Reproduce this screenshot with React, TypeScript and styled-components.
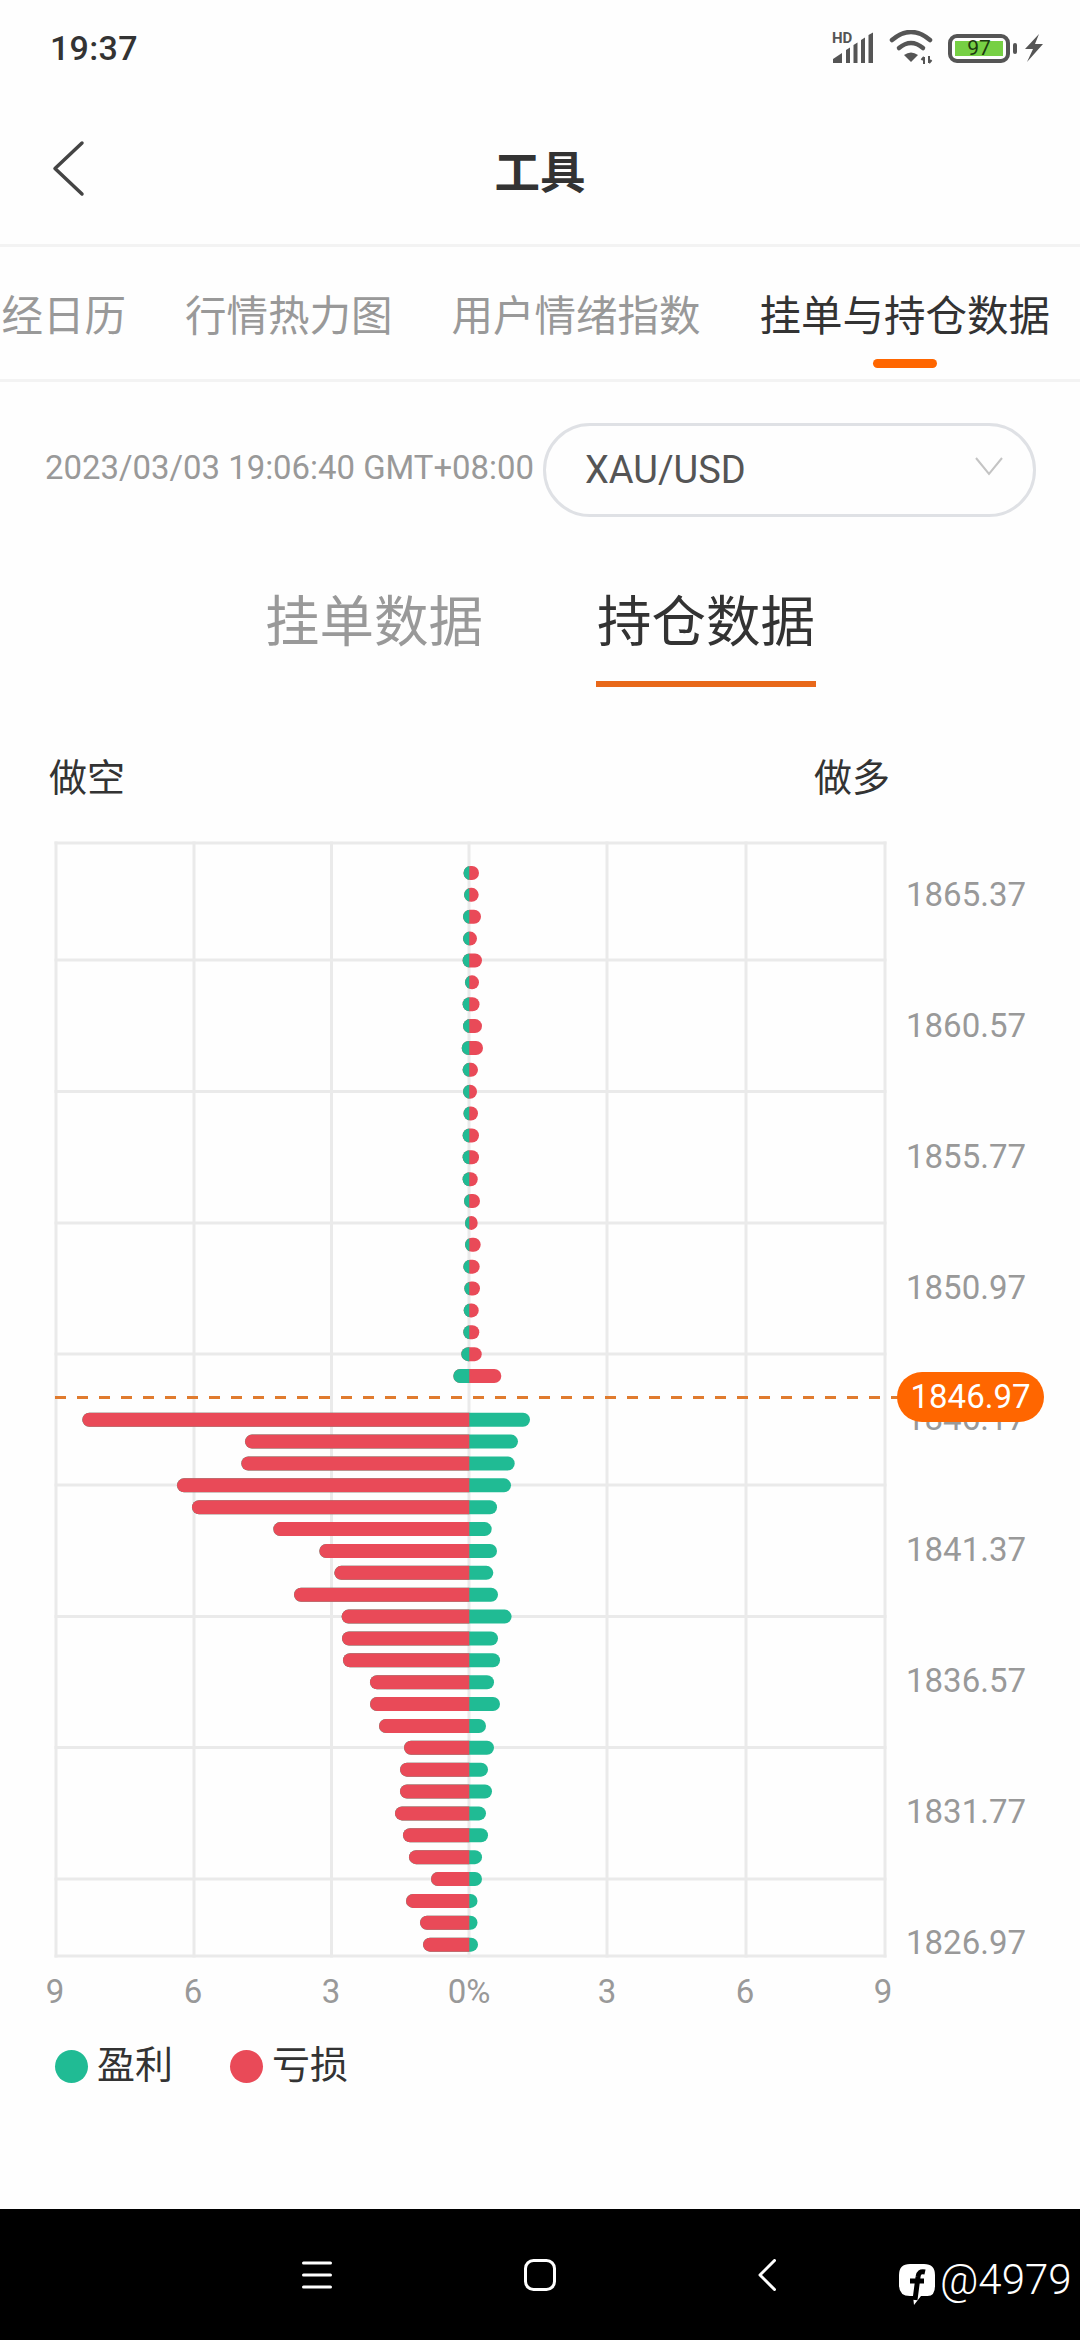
import React from "react";
import styled, { createGlobalStyle } from "styled-components";

const Global = createGlobalStyle`
  html, body { margin: 0; padding: 0; background: #fff; }
  body { font-family: Roboto, "Noto Sans CJK SC", sans-serif; }
`;

const Page = styled.div`
  width: 1080px;
  height: 2340px;
  display: flex;
  flex-direction: column;
  background: #fefefe;
  overflow: hidden;
`;

const StatusBar = styled.div`
  height: 100px;
  flex: none;
  display: flex;
  align-items: center;
  justify-content: space-between;
  padding: 0 37px 4px 50px;
  box-sizing: border-box;
`;
const Clock = styled.span`
  font-size: 34px;
  font-weight: 500;
  color: #333;
  letter-spacing: 0.3px;
`;
const StatusIcons = styled.div`
  display: flex;
  align-items: center;
`;
const Signal = styled.svg`
  display: block;
  width: 42px;
  height: 32px;
  margin-right: 15px;
  overflow: visible;
`;
const Wifi = styled.svg`
  display: block;
  width: 46px;
  height: 36px;
  margin-right: 13px;
`;
const Battery = styled.div`
  position: relative;
  width: 62px;
  height: 29px;
  box-sizing: border-box;
  border: 4px solid #555;
  border-radius: 9px;
  padding: 3px;
  margin-right: 14px;
  display: flex;
  &::after {
    content: "";
    position: absolute;
    right: -11px;
    top: 5px;
    width: 4px;
    height: 11px;
    border-radius: 2px;
    background: #555;
  }
`;
const BatteryFill = styled.div`
  flex: 1;
  background: #76d044;
  color: #1d3a10;
  font-size: 21px;
  line-height: 15px;
  text-align: center;
  overflow: visible;
`;
const Bolt = styled.svg`
  display: block;
  width: 19px;
  height: 29px;
`;

const Header = styled.header`
  height: 144px;
  flex: none;
  position: relative;
  display: flex;
  align-items: center;
  justify-content: center;
  border-bottom: 3px solid #f3f3f3;
`;
const BackButton = styled.svg`
  position: absolute;
  left: 50px;
  top: 40px;
  width: 36px;
  height: 58px;
`;
const Title = styled.h1`
  margin: 0 0 6px;
  font-family: "Noto Sans CJK SC", sans-serif;
  font-size: 45.5px;
  font-weight: 700;
  color: #333;
`;

const TabStrip = styled.nav`
  height: 132px;
  flex: none;
  display: flex;
  justify-content: flex-end;
  align-items: center;
  gap: 59px;
  padding-right: 30px;
  overflow: hidden;
  border-bottom: 3px solid #f3f3f3;
`;
const Tab = styled.div<{ $active?: boolean }>`
  flex: none;
  position: relative;
  font-family: "Noto Sans CJK SC", sans-serif;
  font-size: 41.5px;
  line-height: 60px;
  color: ${(p) => (p.$active ? "#333" : "#999")};
  ${(p) =>
    p.$active &&
    `&::after {
      content: "";
      position: absolute;
      left: 50%;
      margin-left: -32px;
      bottom: -25px;
      width: 64px;
      height: 9px;
      border-radius: 5px;
      background: #ff6600;
    }`}
`;

const ToolRow = styled.div`
  margin-top: 41px;
  padding-left: 45px;
  display: flex;
  align-items: center;
  gap: 9px;
`;
const DateText = styled.span`
  flex: none;
  width: 489px;
  white-space: nowrap;
  font-size: 32.9px;
  color: #999;
  padding-bottom: 6px;
`;
const Select = styled.div`
  width: 493px;
  height: 94px;
  box-sizing: border-box;
  border: 3px solid #dfe1e5;
  border-radius: 47px;
  display: flex;
  align-items: center;
  justify-content: space-between;
  padding: 0 29px 0 39px;
  font-size: 38px;
  color: #555;
`;
const Chevron = styled.svg`
  width: 30px;
  height: 20px;
  margin-bottom: 8px;
`;

const SubTabs = styled.div`
  margin-top: 69px;
  display: flex;
  justify-content: center;
  gap: 112px;
`;
const SubTab = styled.div<{ $active?: boolean }>`
  width: 220px;
  text-align: center;
  font-family: "Noto Sans CJK SC", sans-serif;
  font-size: 54.5px;
  line-height: 64px;
  padding-bottom: 31px;
  color: ${(p) => (p.$active ? "#333" : "#999")};
  border-bottom: 6px solid ${(p) => (p.$active ? "#e8681a" : "transparent")};
`;

const SideLabels = styled.div`
  margin-top: 66px;
  padding: 0 190px 0 49px;
  display: flex;
  justify-content: space-between;
  font-family: "Noto Sans CJK SC", sans-serif;
  font-size: 38px;
  line-height: 44px;
  color: #333;
`;

const ChartRow = styled.div`
  position: relative;
  margin-top: 41px;
  padding-left: 50px;
  display: flex;
  height: 1122px;
`;
const Plot = styled.svg`
  display: block;
  flex: none;
  width: 850px;
  height: 1122px;
`;
const PriceAxis = styled.div`
  margin: 0 0 -3px 6px;
  padding: 36.5px 0 0;
  display: flex;
  flex-direction: column;
  justify-content: space-between;
  font-size: 33px;
  line-height: 40px;
  color: #999;
`;
const PriceBadge = styled.div`
  position: absolute;
  left: 897px;
  top: 534px;
  width: 147px;
  height: 50px;
  border-radius: 25px;
  background: #ff6600;
  color: #fff;
  font-size: 33px;
  line-height: 50px;
  text-align: center;
`;

const XAxis = styled.div`
  margin-top: 12px;
  display: flex;
  gap: 28px;
`;
const XTick = styled.span`
  width: 110px;
  text-align: center;
  font-size: 33px;
  line-height: 40px;
  color: #999;
`;

const Legend = styled.div`
  margin-top: 28px;
  padding-left: 55px;
  display: flex;
  align-items: center;
`;
const LegendItem = styled.div`
  display: flex;
  align-items: center;
  gap: 9px;
  margin-right: 57px;
`;
const LegendText = styled.span`
  font-family: "Noto Sans CJK SC", sans-serif;
  font-size: 38px;
  line-height: 44px;
  padding-bottom: 9px;
  color: #333;
`;
const LegendDot = styled.span<{ $color: string }>`
  width: 33px;
  height: 33px;
  border-radius: 50%;
  background: ${(p) => p.$color};
`;

const NavBar = styled.div`
  margin-top: auto;
  height: 131px;
  flex: none;
  background: #000;
  display: flex;
  align-items: center;
  padding-left: 302px;
`;
const NavIcon = styled.svg<{ $gap: number }>`
  display: block;
  flex: none;
  margin-right: ${(p) => p.$gap}px;
`;
const Watermark = styled.div`
  display: flex;
  align-items: center;
  gap: 5px;
  margin-top: 19px;
`;
const WatermarkText = styled.span`
  font-family: Roboto, sans-serif;
  font-weight: 300;
  font-size: 42px;
  line-height: 44px;
  margin-bottom: 8px;
  color: #fff;
`;

const GREEN = "#20bb94";
const RED = "#e94a58";
const GRID = "#eaeaea";
const CX = 469.3;

// [left end, right end] in page pixels, one row per price step; null is the slot of the current price
const ROWS: ([number, number] | null)[] = [
  [463.5, 479], [464, 478.7], [463, 481], [463, 477], [462.6, 482],
  [465, 479], [462.6, 479.5], [463, 482], [461.7, 483], [462.6, 478],
  [463, 477], [463.5, 478], [462.6, 479], [462.6, 479], [462.6, 477.7],
  [464, 480], [465, 477.7], [465, 480.7], [463.3, 479.7], [464.3, 480],
  [463.7, 478.7], [463.3, 479.3], [461.3, 481.7], [453.3, 501.3], null,
  [82.3, 530], [245, 518], [241.3, 514.7], [177, 511], [192, 497],
  [273.3, 491.7], [319.3, 497], [334.3, 493.3], [294, 498], [341.6, 511.6],
  [342, 498], [343, 500], [370, 494], [370, 500], [379, 486],
  [404, 494], [400, 488], [400, 492], [395, 486], [403, 488],
  [409, 482], [431, 482], [406, 477.5], [420, 477.5], [423, 478],
];

const V_LINES = [56, 194, 331.5, 469, 607, 746, 885];
const H_LINES = [843, 960, 1091.5, 1223, 1354, 1485, 1616.5, 1747.5, 1879, 1956];
const PRICES = ["1865.37", "1860.57", "1855.77", "1850.97", "1846.17", "1841.37", "1836.57", "1831.77", "1826.97"];
const TICKS = ["9", "6", "3", "0%", "3", "6", "9"];

function Chart() {
  return (
    <Plot viewBox="50 838 850 1122">
      <defs>
        <clipPath id="leftHalf">
          <rect x="50" y="838" width={CX - 50} height="1122" />
        </clipPath>
      </defs>
      {V_LINES.map((x) => (
        <line key={x} x1={x} x2={x} y1="841.5" y2="1957.5" stroke={GRID} strokeWidth="3" />
      ))}
      {H_LINES.map((y) => (
        <line key={y} x1="54.5" x2="886.5" y1={y} y2={y} stroke={GRID} strokeWidth="3" />
      ))}
      {ROWS.map((row, i) => {
        if (!row) return null;
        const y = 873 + i * 21.87 - 7;
        const w = row[1] - row[0];
        const upper = i < 24;
        return (
          <g key={i}>
            <rect x={row[0]} y={y} width={w} height="14" rx="7" fill={upper ? RED : GREEN} />
            <rect x={row[0]} y={y} width={w} height="14" rx="7" fill={upper ? GREEN : RED} clipPath="url(#leftHalf)" />
          </g>
        );
      })}
      <line x1="55" x2="900" y1="1397.5" y2="1397.5" stroke="#e07b2e" strokeWidth="3" strokeDasharray="11 11" />
    </Plot>
  );
}

export default function App() {
  return (
    <Page>
      <Global />
      <StatusBar>
        <Clock>19:37</Clock>
        <StatusIcons>
          <Signal viewBox="0 0 42 32">
            <text x="0" y="11" fontFamily="Roboto, sans-serif" fontWeight="700" fontSize="15" fill="#555">HD</text>
            <path d="M1 31V27L10 21V31Z" fill="#555" />
            <path d="M14 31V18L18 15.5V31ZM21.5 31V13L25.5 10.5V31ZM29 31V8L33 5.5V31ZM36.5 31V3L41 0.5V31Z" fill="#555" />
          </Signal>
          <Wifi viewBox="0 0 46 36">
            <g fill="none" stroke="#555" strokeWidth="4.5" strokeLinecap="round">
              <path d="M3 10Q22 -6 41 10" />
              <path d="M10 18Q22 8 34 18" />
            </g>
            <path d="M15 25Q22 20 29 25L22 32Z" fill="#555" />
            <path d="M35 34V27M35 27L32.5 30M40 26V33M40 33L42.5 30" fill="none" stroke="#555" strokeWidth="2" />
          </Wifi>
          <Battery>
            <BatteryFill>97</BatteryFill>
          </Battery>
          <Bolt viewBox="0 0 19 29">
            <path d="M15 0L1 15H9L3 28L19 10H11Z" fill="#555" />
          </Bolt>
        </StatusIcons>
      </StatusBar>

      <Header>
        <BackButton viewBox="0 0 36 58">
          <path d="M32 3L5 28.5L32 54" fill="none" stroke="#444" strokeWidth="3.5" strokeLinecap="round" strokeLinejoin="round" />
        </BackButton>
        <Title>工具</Title>
      </Header>

      <TabStrip>
        <Tab>财经日历</Tab>
        <Tab>行情热力图</Tab>
        <Tab>用户情绪指数</Tab>
        <Tab $active>挂单与持仓数据</Tab>
      </TabStrip>

      <ToolRow>
        <DateText>2023/03/03 19:06:40 GMT+08:00</DateText>
        <Select>
          <span>XAU/USD</span>
          <Chevron viewBox="0 0 30 20">
            <path d="M2 2L15 18L28 2" fill="none" stroke="#c4c4c4" strokeWidth="2" />
          </Chevron>
        </Select>
      </ToolRow>

      <SubTabs>
        <SubTab>挂单数据</SubTab>
        <SubTab $active>持仓数据</SubTab>
      </SubTabs>

      <SideLabels>
        <span>做空</span>
        <span>做多</span>
      </SideLabels>

      <ChartRow>
        <Chart />
        <PriceAxis>
          {PRICES.map((p) => (
            <span key={p}>{p}</span>
          ))}
        </PriceAxis>
        <PriceBadge>1846.97</PriceBadge>
      </ChartRow>

      <XAxis>
        {TICKS.map((t, i) => (
          <XTick key={i}>{t}</XTick>
        ))}
      </XAxis>

      <Legend>
        <LegendItem>
          <LegendDot $color={GREEN} />
          <LegendText>盈利</LegendText>
        </LegendItem>
        <LegendItem>
          <LegendDot $color={RED} />
          <LegendText>亏损</LegendText>
        </LegendItem>
      </Legend>

      <NavBar>
        <NavIcon $gap={192} width="30" height="28" viewBox="0 0 30 28">
          <path d="M1.5 2H28.5M1.5 14H28.5M1.5 26H28.5" stroke="#fff" strokeWidth="3" strokeLinecap="round" />
        </NavIcon>
        <NavIcon $gap={202} width="32" height="32" viewBox="0 0 32 32">
          <rect x="1.5" y="1.5" width="29" height="29" rx="8" fill="none" stroke="#fff" strokeWidth="3" />
        </NavIcon>
        <NavIcon $gap={123} width="18" height="32" viewBox="0 0 18 32">
          <path d="M16.5 1.5L2 16L16.5 30.5" fill="none" stroke="#fff" strokeWidth="3" strokeLinecap="round" strokeLinejoin="round" />
        </NavIcon>
        <Watermark>
          <svg width="36" height="42" viewBox="0 0 36 42">
            <path d="M11 1H25Q36 1 36 12V23Q36 34 27 33H22L15 42L14 33H11Q0 33 0 22V12Q0 1 11 1Z" fill="#fff" />
            <path d="M26 9Q19.5 7.5 19 14L16 37M11 18H25" fill="none" stroke="#000" strokeWidth="5" />
          </svg>
          <WatermarkText>@4979</WatermarkText>
        </Watermark>
      </NavBar>
    </Page>
  );
}
